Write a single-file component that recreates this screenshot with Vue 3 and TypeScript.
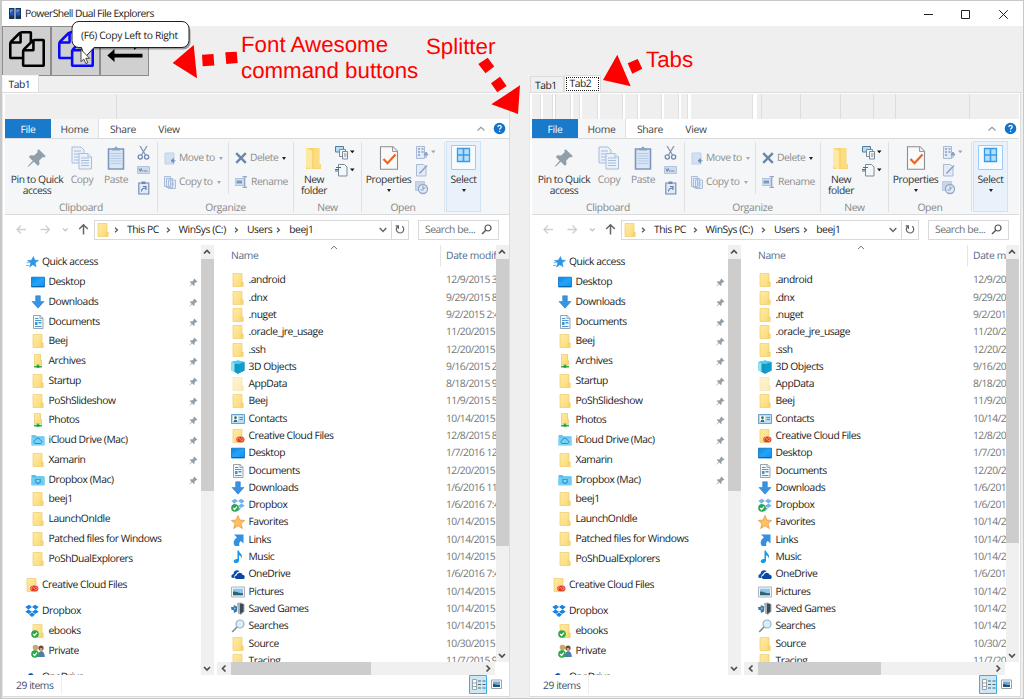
<script setup lang="ts">
interface Entry {
  icon: string
  name: string
  date: string
}
interface TreeNode {
  icon: string
  name: string
  top?: boolean
  gap?: boolean
  pin?: boolean
}
interface Pane {
  id: string
  strips: [number, number][]
}

const panes: Pane[] = [
  { id: 'left', strips: [[111, 1]] },
  {
    id: 'right',
    strips: [
      [8, 2], [20, 2], [23, 1], [38, 2], [47, 2], [65, 2], [90, 2], [105, 2], [129, 2],
      [146, 2], [155, 3], [220, 4], [229, 1], [268, 1], [308, 1], [341, 1], [363, 1], [437, 1],
    ],
  },
]

const tree: TreeNode[] = [
  { icon: 'quick', name: 'Quick access', top: true },
  { icon: 'desktop', name: 'Desktop', pin: true },
  { icon: 'download', name: 'Downloads', pin: true },
  { icon: 'document', name: 'Documents', pin: true },
  { icon: 'folder', name: 'Beej', pin: true },
  { icon: 'netfolder', name: 'Archives', pin: true },
  { icon: 'folder', name: 'Startup', pin: true },
  { icon: 'folder', name: 'PoShSlideshow', pin: true },
  { icon: 'netfolder', name: 'Photos', pin: true },
  { icon: 'cloudfolder', name: 'iCloud Drive (Mac)', pin: true },
  { icon: 'folder', name: 'Xamarin', pin: true },
  { icon: 'dropfolder', name: 'Dropbox (Mac)', pin: true },
  { icon: 'folder', name: 'beej1' },
  { icon: 'folder', name: 'LaunchOnIdle' },
  { icon: 'folder', name: 'Patched files for Windows' },
  { icon: 'folder', name: 'PoShDualExplorers' },
  { icon: 'creative', name: 'Creative Cloud Files', top: true, gap: true },
  { icon: 'dropbox', name: 'Dropbox', top: true, gap: true },
  { icon: 'syncfolder', name: 'ebooks' },
  { icon: 'people', name: 'Private' },
  { icon: 'onedrive', name: 'OneDrive', top: true, gap: true },
]

const files: Entry[] = [
  { icon: 'folder', name: '.android', date: '12/9/2015 3:14 PM' },
  { icon: 'folder', name: '.dnx', date: '9/29/2015 8:20 AM' },
  { icon: 'folder', name: '.nuget', date: '9/2/2015 2:41 PM' },
  { icon: 'folder', name: '.oracle_jre_usage', date: '11/20/2015 9:10 AM' },
  { icon: 'folder', name: '.ssh', date: '12/20/2015 4:05 PM' },
  { icon: 'cube', name: '3D Objects', date: '9/16/2015 2:12 PM' },
  { icon: 'palefolder', name: 'AppData', date: '8/18/2015 9:30 AM' },
  { icon: 'folder', name: 'Beej', date: '11/9/2015 5:22 PM' },
  { icon: 'contacts', name: 'Contacts', date: '10/14/2015 7:02 AM' },
  { icon: 'creative', name: 'Creative Cloud Files', date: '12/8/2015 8:33 AM' },
  { icon: 'desktop', name: 'Desktop', date: '1/7/2016 12:15 PM' },
  { icon: 'document', name: 'Documents', date: '12/20/2015 4:05 PM' },
  { icon: 'download', name: 'Downloads', date: '1/6/2016 11:48 PM' },
  { icon: 'dropsync', name: 'Dropbox', date: '1/6/2016 7:42 PM' },
  { icon: 'star', name: 'Favorites', date: '10/14/2015 7:02 AM' },
  { icon: 'link', name: 'Links', date: '10/14/2015 7:02 AM' },
  { icon: 'music', name: 'Music', date: '10/14/2015 7:02 AM' },
  { icon: 'onedrive', name: 'OneDrive', date: '1/6/2016 7:42 PM' },
  { icon: 'picture', name: 'Pictures', date: '10/14/2015 7:02 AM' },
  { icon: 'games', name: 'Saved Games', date: '10/14/2015 7:02 AM' },
  { icon: 'search', name: 'Searches', date: '10/14/2015 7:02 AM' },
  { icon: 'folder', name: 'Source', date: '10/30/2015 1:20 PM' },
  { icon: 'folder', name: 'Tracing', date: '11/7/2015 9:44 AM' },
]

const crumbs = ['This PC', 'WinSys (C:)', 'Users', 'beej1']
const crumbGaps = [51.5, 68.5, 42.2, 40]
</script>

<template>
  <div class="window">
    <svg class="defs" width="0" height="0">
      <defs>
        <linearGradient id="gFold" x1="0" y1="0" x2="1" y2="1">
          <stop offset="0" stop-color="#ffeba3" /><stop offset="1" stop-color="#fbd974" />
        </linearGradient>
        <linearGradient id="gDesk" x1="0" y1="0" x2="1" y2="1">
          <stop offset="0" stop-color="#0a84e0" /><stop offset=".5" stop-color="#22a4fa" /><stop offset="1" stop-color="#0c93f2" />
        </linearGradient>
        <symbol id="folder" viewBox="0 0 14 14">
          <path d="M2 .5h9v8.500h1.500v4.500H2z" fill="url(#gFold)" /><path d="M2 .5h9v8.500M2 .5v13h10V9h-1.800v4.500" fill="none" stroke="#eecb6b" stroke-width=".7" />
        </symbol>
        <symbol id="palefolder" viewBox="0 0 14 14"><g opacity=".5"><use href="#folder" width="14" height="14" /></g></symbol>
        <symbol id="netfolder" viewBox="0 0 14 14">
          <path d="M3.500 .3h6v6h1v4.200h-7z" fill="url(#gFold)" stroke="#e5c055" stroke-width=".6" /><path d="M7 10.500v2M3 12.600h8" stroke="#35b548" stroke-width="1.600" /><path d="M5.500 12.600h3" stroke="#1e9434" stroke-width="2" />
        </symbol>
        <symbol id="desktop" viewBox="0 0 14 14"><path d="M.5 2.200h13v9.800H.5z" fill="url(#gDesk)" stroke="#1071bd" stroke-width=".8" /><path d="M1 11.500h12" stroke="#0b62a8" stroke-width=".9" /></symbol>
        <symbol id="download" viewBox="0 0 14 14"><path d="M4.700.8h4.600v5.700H13L7 13.200 1 6.500h3.700z" fill="#3893e4" stroke="#2c7dcb" stroke-width=".6" /></symbol>
        <symbol id="document" viewBox="0 0 14 14">
          <path d="M2.500.5h6.700l2.800 2.800v10.200H2.500z" fill="#f4f8fb" stroke="#8c9ba6" stroke-width=".9" /><path d="M9 .5v3h3" fill="none" stroke="#8c9ba6" stroke-width=".8" /><path d="M4 5.500h6.500M4 3.500h3.500M4 11.500h6.500" stroke="#4d9ccc" stroke-width="1" /><path d="M4 7h2.500v3H4zM7.500 7h3v1.500h-3z" fill="#3c96d2" />
        </symbol>
        <symbol id="cloudfolder" viewBox="0 0 14 14"><path d="M.5 2h4l1 1.200h8v9H.5z" fill="#67c8f2" /><path d="M.5 5h13v7.500H.5z" fill="#7ad2f7" /><path d="M4 10.500a1.800 1.800 0 0 1 .3-3.400 2.600 2.600 0 0 1 5 0 1.800 1.800 0 0 1 .5 3.400z" fill="none" stroke="#2b92c3" /></symbol>
        <symbol id="dropfolder" viewBox="0 0 14 14"><path d="M.5 2h4l1 1.200h8v9H.5z" fill="#55c0ed" /><path d="M.5 4.500h13v7.700H.5z" fill="#72cdf5" /><path d="M4 6h6v3.500l-3 2-3-2z" fill="#3aa1d6" /><path d="M5.500 7h3v1.500L7 9.500 5.500 8.500z" fill="#8bdafa" /></symbol>
        <symbol id="quick" viewBox="0 0 14 14"><path d="M8.500 1.500l1.100 3.500 3.900.4-3.300 2.400.9 3.900-3.300-2-3.200 2.400 1.100-4-3.200-2.600 3.900-.3z" fill="#2b96e8" stroke="#2b96e8" stroke-width=".6" /><path d="M1 10.500h3M1.600 7.700h2.500" stroke="#65b4ee" stroke-width=".9" /></symbol>
        <symbol id="creative" viewBox="0 0 14 14"><use href="#folder" width="14" height="14" /><ellipse cx="9.300" cy="10.400" rx="4.200" ry="2.900" fill="#e23b2b" /><path d="M7 11.700a1.400 1.400 0 1 1 1.500-2.200l1.900 2.200a1.400 1.400 0 1 0-.6-2.300" fill="none" stroke="#ffb9a0" stroke-width=".7" /></symbol>
        <symbol id="dropshape" viewBox="0 0 14 14"><path d="M4 .7L7 3 3.300 5.400.3 3zM10 .7L13.700 3l-3 2.400L7 3zM.3 7.700l3-2.300L7 7.800 4 10zM7 7.800l3.700-2.400 3 2.300L10 10zM4 10.800l3-2.200 3 2.200-3 2.300z" fill="#1583e2" /></symbol>
        <symbol id="dropbox" viewBox="0 0 14 14"><use href="#dropshape" width="14" height="14" /></symbol>
        <symbol id="badge" viewBox="0 0 14 14"><circle cx="4" cy="10" r="3.800" fill="#2aa746" /><path d="M2.200 10l1.400 1.500L6 8.600" stroke="#fff" stroke-width="1.200" fill="none" /></symbol>
        <symbol id="dropsync" viewBox="0 0 14 14"><g opacity=".6"><use href="#dropshape" width="14" height="14" /></g><use href="#badge" width="14" height="14" /></symbol>
        <symbol id="syncfolder" viewBox="0 0 14 14"><use href="#folder" width="14" height="14" /><use href="#badge" width="14" height="14" /></symbol>
        <symbol id="people" viewBox="0 0 14 14"><circle cx="4.500" cy="3.500" r="2.800" fill="#c9a86a" /><path d="M.8 12c0-8 7-8 7 0z" fill="#7fa28d" /><circle cx="10" cy="4" r="2.600" fill="#6a4b38" /><path d="M8.800 4h2.500v3H8.800z" fill="#d6a27b" /><path d="M6.800 13c0-8 7-8 7 0z" fill="#4d7fae" /><use href="#badge" width="14" height="14" /></symbol>
        <symbol id="onedrive" viewBox="0 0 14 14"><path d="M.8 10.800C-.3 8.500 1 7.200 2.500 7c0-3.500 4-5 6.200-2.500C7 4.500 5.500 5.500 5.200 7.300 3.400 7.600 3 9.500 3.800 11z" fill="#0a4fae" /><path d="M5 12c-1.800-.8-1.200-3.600.8-3.700.3-3.300 5-3.500 5.700-.5 2.800.2 2.800 3.500 1 4.200z" fill="#0a46a6" /></symbol>
        <symbol id="cube" viewBox="0 0 14 14"><path d="M.5 2L7 .5l6.500 1.500V10.500L7 13.700.5 10.500z" fill="#27b3d9" /><path d="M.5 2L7 4v9.700L.5 10.500z" fill="#8be6f2" /><path d="M3.500 3.500L7 4v9.700l-3.500-2z" fill="#1796bd" /><path d="M7 4l6.500-2V10.500L7 13.700z" fill="#129bd0" /><path d="M.5 2L7 .5l6.500 1.500L7 4z" fill="#4fcde6" /></symbol>
        <symbol id="contacts" viewBox="0 0 14 14"><path d="M.5 2.500h13v9H.5z" fill="#b9def3" stroke="#5d9abf" stroke-width=".9" /><path d="M2 4h5v6H2z" fill="#fff" /><circle cx="4.500" cy="5.700" r="1.400" fill="#466a5b" /><path d="M2.500 10c0-3.500 4-3.500 4 0z" fill="#2d7769" /><path d="M8.500 5.500h3.500M8.500 7.500h3.500" stroke="#3b83b5" stroke-width=".8" /></symbol>
        <symbol id="star" viewBox="0 0 14 14"><path d="M7 .5l1.900 4.600 4.800.3-3.700 3.200 1.300 4.900L7 10.800l-4.300 2.700L4 8.600.3 5.400l4.800-.3z" fill="#fbc162" stroke="#e59b4b" stroke-width=".8" /></symbol>
        <symbol id="link" viewBox="0 0 14 14"><path d="M3 1.500h9.500v9L9.800 8C8.300 9 7.700 11 8.500 13H4C1.500 10 2.800 6.500 6 4.500z" fill="#3590df" /></symbol>
        <symbol id="music" viewBox="0 0 14 14"><path d="M6.500.5h1.300c.5 3 4.400 3.300 2.900 8-.2-2-1.200-2.900-2.700-3.300v5.600c-.3 3-5 3.300-5.300.8-.1-1.900 2-3 3.800-2.500z" fill="#1597ea" /></symbol>
        <symbol id="picture" viewBox="0 0 14 14"><path d="M.5 2h13v10H.5z" fill="#f5f7f8" stroke="#97a3ac" stroke-width=".8" /><path d="M2 3.700h10v6.600H2z" fill="#8fc7ee" /><path d="M2 7c3-1.500 5 2 10 1v2.300H2z" fill="#2d6475" /></symbol>
        <symbol id="games" viewBox="0 0 14 14"><path d="M6 1l4-.5 3.500 2v7L10 13l-3-1.500z" fill="#a8b0b5" /><path d="M9 1.500l3.500.5v7.500l-3.500 2.500z" fill="#3c4b54" /><path d="M0 5h2.500l.5-2 3 1.500v5L3 11l-.5-3H.5z" fill="#3a78ac" /><path d="M3 5l2 1.500-2 1.500z" fill="#8fbbdb" /></symbol>
        <symbol id="search" viewBox="0 0 14 14"><circle cx="9" cy="5" r="4" fill="#d8effb" stroke="#9ab4c6" stroke-width="1.200" /><path d="M6 8L1.200 13" stroke="#8a8f94" stroke-width="1.800" /></symbol>
        <symbol id="pin" viewBox="0 0 14 14"><path d="M8.200.8l5 5-1.300.9-.8-.4-2.600 2.600.3 2.500-1.300 1L4.800 9.700 1 13.200l-.5-.4L4 8.900 1.300 6.300l1-1.200 2.700.2 2.500-2.500-.3-1z" fill="#929fa8" /></symbol>
        <symbol id="files" viewBox="0 0 1792 1792"><path fill="currentColor" d="M1696 384q40 0 68 28t28 68v1216q0 40-28 68t-68 28h-960q-40 0-68-28t-28-68v-288h-544q-40 0-68-28t-28-68v-672q0-40 20-88t48-76l408-408q28-28 76-48t88-20h416q40 0 68 28t28 68v328q68-40 128-40h416zm-544 213l-299 299h299v-299zm-640-384l-299 299h299v-299zm196 647l316-316v-416h-384v416q0 40-28 68t-68 28h-416v640h512v-256q0-40 20-88t48-76zm956 804v-1152h-384v416q0 40-28 68t-68 28h-416v640h896z" /></symbol>
      </defs>
    </svg>

    <header class="titlebar">
      <svg class="appicon" viewBox="0 0 12 11"><path d="M0 0h5.500v11H0zM6.500 0H12v11H6.500z" fill="#17345f" /><path d="M1 1.500h3.500v6H1zM7.500 1.500H11v6H7.500z" fill="#2459b8" /><path d="M1 1.500h3.500L1 5zM7.500 1.500H11L7.500 5z" fill="#6f9ade" /></svg>
      <span class="title">PowerShell Dual File Explorers</span>
      <svg class="winctl" viewBox="0 0 90 14" width="90" height="14" fill="none" stroke="#222">
        <path d="M4 7.500h9" /><path d="M41.500 3.500h8v8h-8z" /><path d="M79.200 3.200l8.600 8.600M87.800 3.200l-8.600 8.600" />
      </svg>
    </header>

    <div class="toolbar">
      <button class="cmd"><svg width="36" height="36"><use href="#files" /></svg></button>
      <button class="cmd active"><svg width="36" height="36"><use href="#files" /></svg></button>
      <button class="cmd"><svg width="36" height="36" viewBox="0 0 36 36"><path d="M0 10.500h27V6l8.500 6.500L27 19v-4.800H0zM35.500 22.700H7.500V18L.3 24.500l7.200 6.500v-4.600h28z" fill="#000" /></svg></button>
    </div>

    <main class="split">
      <section v-for="pane in panes" :key="pane.id" class="pane" :class="pane.id">
        <nav class="tabs">
          <span class="tab" :class="{ current: pane.id === 'left' }">Tab1</span>
          <span v-if="pane.id === 'right'" class="tab current second"><i>Tab2</i></span>
        </nav>
        <div class="page">
          <div class="strip">
            <i v-for="s in pane.strips" :key="s[0]" :class="{ thick: s[1] > 1 }" :style="{ left: s[0] + 'px', width: s[1] + 'px' }"></i>
          </div>

          <div class="menubar">
            <span class="file">File</span><span class="home">Home</span><span class="share">Share</span><span class="view">View</span>
            <svg class="help" width="32" height="14" viewBox="0 0 32 14">
              <path d="M2.500 8.500L6 5.300l3.500 3.200" fill="none" stroke="#999" stroke-width="1.200" /><circle cx="24.500" cy="6.500" r="5.800" fill="#1273c9" />
              <path d="M22.800 5.100c.1-2.300 3.500-2.200 3.400-.1 0 1.300-1.600 1.200-1.600 2.600M24.600 8.700v1.300" fill="none" stroke="#fff" stroke-width="1.200" />
            </svg>
          </div>

          <div class="ribbon">
            <div class="group clip">
              <div class="gbody">
                <div class="big pinq"><svg width="20" height="20"><use href="#pin" /></svg><span>Pin to Quick<br />access</span></div>
                <div class="big dim copy">
                  <svg width="22" height="24" viewBox="0 0 22 24" fill="#eaf1fa" stroke="#a9bddb"><path d="M1 1h9l3 3v13H1z" /><path d="M3 5h7M3 8h7M3 11h7M3 14h7" /><path d="M8 7.500h9l3.500 3.500v12H8z" /><path d="M10 12h8M10 14.500h8M10 17h8M10 19.500h8M17 7.500V11h3.500" /></svg>
                  <span>Copy</span>
                </div>
                <div class="big dim paste">
                  <svg width="18" height="24" viewBox="0 0 18 24"><path d="M1.500 3h15v20h-15z" fill="#d9e6f6" stroke="#7d96bd" stroke-width="1.600" /><path d="M5 4.500V2h2.500a1.500 1.500 0 0 1 3 0H13v2.500z" fill="#8fa4c5" /><path d="M3.500 7.500h11M3.500 10h11M3.500 12.500h11M3.500 15h11M3.500 17.500h11" stroke="#b5c9e4" /></svg>
                  <span>Paste</span>
                </div>
                <svg class="minis" width="13" height="50" viewBox="0 0 13 50" fill="none">
                  <path d="M3 0l5.500 9M10 0L4.500 9" stroke="#8496b3" stroke-width="1.300" /><circle cx="3.300" cy="11" r="2.100" stroke="#7189b0" stroke-width="1.300" /><circle cx="9.600" cy="11" r="2.100" stroke="#7189b0" stroke-width="1.300" />
                  <path d="M.5 20.500h12v7H.5z" fill="#cfdbec" stroke="#b4c4dd" /><path d="M2 22.500l1.200 3 1-3 1.200 3M6.500 25h4" stroke="#6680a9" stroke-width=".9" />
                  <path d="M1.800 37h10v11h-10z" fill="#e1ebf7" stroke="#7088b0" stroke-width="1.100" /><path d="M4.500 35.500h4v2.500h-4z" fill="#7088b0" /><path d="M4.500 45.500c0-2.500 1-3.500 4-3.500M6 40.500h3v3.500" stroke="#617caa" stroke-width="1.100" />
                </svg>
              </div>
              <div class="glabel">Clipboard</div>
            </div>

            <div class="group org">
              <div class="gbody">
                <div class="rows move">
                  <p><svg width="12" height="13" viewBox="0 0 12 13"><path d="M1 1h9v11H1z" fill="#d3e0f1" stroke="#c1d0e6" /><path d="M11.500 8.700H7.500M9.500 6.500l-2.500 2.200 2.500 2.200z" fill="#7390bd" stroke="#7390bd" stroke-width=".9" /></svg><span>Move to</span><b class="dd grey"></b></p>
                  <p><svg width="12" height="13" viewBox="0 0 12 13" fill="#e4edf8" stroke="#a9bcd9"><path d="M.5.5h6v10h-6zM2.500 2.500h6v9h-6zM4.500 4h7v8.500h-7zM6 7h4M6 9h4" /></svg><span>Copy to</span><b class="dd grey"></b></p>
                </div>
                <div class="rows del">
                  <p><svg width="12" height="12" viewBox="0 0 12 12"><path d="M1.200 1.200l9.600 9.600M10.800 1.200l-9.600 9.600" stroke="#6c86ad" stroke-width="2.400" /></svg><span>Delete</span><b class="dd"></b></p>
                  <p><svg width="13" height="12" viewBox="0 0 13 12" fill="none"><path d="M0 2.500h9v7H0z" fill="#d2dfef" stroke="#b0c3de" /><path d="M1.500 4.500H7v3H1.500z" fill="#7f9ac2" /><path d="M7.500.7h4.500M9.800 1v10M7.500 11.300h4.500" stroke="#7e96bd" /></svg><span>Rename</span></p>
                </div>
              </div>
              <div class="glabel">Organize</div>
            </div>

            <div class="group new">
              <div class="gbody">
                <div class="big nf"><svg width="18" height="24" viewBox="0 0 18 24"><path d="M1 2h13.500v16H16v5H1z" fill="#f8d56f" /><path d="M1 2l6 3v18.500L1 21z" fill="#ffe9a0" /><path d="M9 2h5v16h1.500v4h-6.500z" fill="#fbdc82" /></svg><span>New<br />folder</span></div>
                <svg class="newmini" width="20" height="36" viewBox="0 0 20 36" fill="#f3f7fa" stroke="#7b8b96"><path d="M.5.500h8v5.500h-8z" fill="#b9dcf0" stroke="#4e7f9f" /><path d="M4.500 3.500h6v7h-6z" /><path d="M7.500 5.500h5v7.500h-5zM9 8h2.500M9 10h2.500" /><path d="M3.500 18.500h6l2.500 2.500v9h-8.500z" /><path d="M0 23.500h4M1 21.500h5M0 25h3" stroke="#2777b9" /><path d="M15 4.500h4.500l-2.200 2.700zM15 22.500h4.500l-2.200 2.700z" fill="#111" stroke="none" /></svg>
              </div>
              <div class="glabel">New</div>
            </div>

            <div class="group open">
              <div class="gbody">
                <div class="big prop"><svg width="20" height="24" viewBox="0 0 20 24"><path d="M1.500.7h12.500l4.500 4.500v18H1.500z" fill="#fafafa" stroke="#8d8d8d" stroke-width="1.100" /><path d="M13.500 1v4.500h5" fill="#eee" stroke="#9a9a9a" /><path d="M4.500 13l4 4.200 8-8.700" fill="none" stroke="#f0631e" stroke-width="2.200" /></svg><span>Properties</span><b class="dd"></b></div>
                <svg class="openmini" width="22" height="50" viewBox="0 0 22 50" fill="#e3ebf7" stroke="#a9b9d6"><path d="M1.500.5h8v12h-8z" /><path d="M3 3h2M3 6h2M3 9h2M6.500 3h2M6.500 6h2" stroke="#8c9fc2" stroke-width="1.300" /><path d="M11 12V7M9 9l2-3 2 3z" fill="#8ba0c6" stroke="#8ba0c6" /><path d="M1.500 18.500h7l2.500 2.500v9h-9.500z" /><path d="M4.500 27.500l7.500-8" stroke="#8da2c9" stroke-width="1.600" /><path d="M.5 35.500h9v9h-9z" fill="#c8d5e9" stroke="#bccbe2" /><circle cx="8" cy="43" r="4.500" stroke="#94a7c8" stroke-width="1.300" /><path d="M8 40v3l2.500-1.500M5.500 44h3" stroke="#8296b9" /><path d="M16 4.500h4.500l-2.200 2.700z" fill="#a5a5a5" stroke="none" /></svg>
              </div>
              <div class="glabel">Open</div>
            </div>

            <div class="select">
              <svg width="25" height="25" viewBox="0 0 25 25"><path d="M.5.5h24v24H.5z" fill="#f5fbff" stroke="#9dcbf5" /><path d="M6.500 3.500h12v13h-12z" fill="#b5e0fb" stroke="#3a9bea" stroke-width="1.300" /><path d="M12.500 3.500v13M6.500 10h12" stroke="#3a9bea" stroke-width="1.600" /></svg>
              <span>Select</span><b class="dd"></b>
            </div>
          </div>

          <div class="address">
            <svg class="navs" width="76" height="14" viewBox="0 0 76 14" fill="none" stroke-width="1.300">
              <path d="M10 6.500H1M5 2.500l-4 4 4 4M24.500 6.500h9M29.500 2.500l4 4-4 4" stroke="#cfcfcf" /><path d="M47 5.500l2.300 2.300L51.600 5.500" stroke="#c5c5c5" /><path d="M67.500 11.500V2M63.200 6l4.300-4.300L71.800 6" stroke="#666" stroke-width="1.500" />
            </svg>
            <div class="path">
              <svg class="pfold" width="14" height="14"><use href="#folder" /></svg>
              <span v-for="(c, i) in crumbs" :key="c" class="crumb" :style="{ width: crumbGaps[i] + 'px' }">
                <svg width="5" height="8" viewBox="0 0 5 8"><path d="M1 1.700L3.500 4 1 6.300" fill="none" stroke="#555" stroke-width="1.200" /></svg>{{ c }}
              </span>
              <svg class="drop" width="8" height="6" viewBox="0 0 8 6"><path d="M.7 1l3.300 3.500L7.300 1" fill="none" stroke="#666" stroke-width="1.500" /></svg>
              <span class="refresh"><svg width="10" height="11" viewBox="0 0 10 11"><path d="M7.200 2.300A3.700 3.700 0 1 1 3 2.200M3.400 5V1.800H.6" fill="none" stroke="#666" stroke-width="1.200" /></svg></span>
            </div>
            <div class="find"><span>Search be...</span><svg width="11" height="11" viewBox="0 0 11 11"><circle cx="7" cy="4" r="3" fill="none" stroke="#555" stroke-width="1.200" /><path d="M5 6L1 10" stroke="#555" stroke-width="1.500" /></svg></div>
          </div>

          <div class="content">
            <div class="tree">
              <div v-for="(n, i) in tree" :key="i" class="node" :class="{ top: n.top, gap: n.gap }">
                <svg class="ico" width="14" height="14"><use :href="'#' + n.icon" /></svg>
                <span>{{ n.name }}</span>
                <svg v-if="n.pin" class="pin" width="9" height="9"><use href="#pin" /></svg>
              </div>
            </div>
            <div class="vbar">
              <svg width="12" height="13" viewBox="0 0 12 13"><path d="M3 8.500L6 5.500l3 3" fill="none" stroke="#505050" stroke-width="1.700" /></svg>
              <i class="thumb"></i>
              <svg width="12" height="13" viewBox="0 0 12 13"><path d="M3 5l3 3 3-3" fill="none" stroke="#505050" stroke-width="1.700" /></svg>
            </div>
            <div class="listing">
              <div class="upper">
                <div class="table">
                  <div class="thead"><span class="cname">Name</span><svg width="8" height="5" viewBox="0 0 8 5"><path d="M1 4l3-2.800L7 4" fill="none" stroke="#777" /></svg><span class="cdate">Date modified</span></div>
                  <div v-for="f in files" :key="f.name" class="row">
                    <svg class="ico" width="14" height="14"><use :href="'#' + f.icon" /></svg><span class="fname">{{ f.name }}</span><span class="date">{{ f.date }}</span>
                  </div>
                </div>
                <div class="vbar list">
                  <svg width="12" height="13" viewBox="0 0 12 13"><path d="M3 8.500L6 5.500l3 3" fill="none" stroke="#505050" stroke-width="1.700" /></svg>
                  <i class="thumb"></i>
                  <svg width="12" height="13" viewBox="0 0 12 13"><path d="M3 5l3 3 3-3" fill="none" stroke="#505050" stroke-width="1.700" /></svg>
                </div>
              </div>
              <div class="hbar">
                <svg width="14" height="13" viewBox="0 0 14 13"><path d="M8.500 3.500l-3 3 3 3" fill="none" stroke="#505050" stroke-width="1.700" /></svg>
                <i class="thumb"></i>
                <svg width="14" height="13" viewBox="0 0 14 13"><path d="M5.500 3.500l3 3-3 3" fill="none" stroke="#505050" stroke-width="1.700" /></svg>
              </div>
            </div>
          </div>

          <footer class="status">
            <span>29 items</span>
            <svg width="34" height="19" viewBox="0 0 34 19"><path d="M.5.5h17v18H.5z" fill="#cce8f6" stroke="#3cb0e0" /><path d="M3.500 4.500h4v10h-4zM3.500 8h4M3.500 11.500h4" fill="#fff" stroke="#8a8f94" stroke-width=".8" /><path d="M9 6h3M13.500 6h3M9 9.500h3M13.500 9.500h3M9 13h3M13.500 13h3" stroke="#4d6472" /><path d="M22.500 5h10v8.500h-10z" fill="#fff" stroke="#9aa3aa" /><path d="M24 6.500h7v5.500h-7z" fill="#6ea9dd" /><path d="M24 9c3 0 4 1.500 7 1v2h-7z" fill="#25516b" /></svg>
          </footer>
        </div>
      </section>
    </main>

    <div class="notes">
      <svg width="1024" height="120" viewBox="0 0 1024 120">
        <g fill="#f00">
          <path d="M172.700 63L193.700 45l3.300 33.300zM202 54.700l11.500-.7.8 11.600-11.600.7zM225.300 52.300l11.400-.6 1 11.200-11.400 1.100z" />
          <path d="M478.300 64l9.400-6.300 6.500 8.900-8.700 6.700zM491 83.300l9-6.600 6.700 9.300-9.400 6.300zM491.300 104.300L520 85.300l-2 28.700z" />
          <path d="M617.300 54.700L603 80l27.700 6.300zM627.700 63.300l10-4.300 4.600 9.700-10 5z" />
        </g>
        <g transform="translate(1.500 2)" opacity=".35"><rect x="72" y="22" width="117" height="25.500" rx="7" fill="#000" /></g>
        <path d="M79 21.500h103a7 7 0 0 1 7 7v12a7 7 0 0 1-7 7H94l-9.500 10.500-3-10.500H79a7 7 0 0 1-7-7v-12a7 7 0 0 1 7-7z" fill="#fff" stroke="#222" />
        <path d="M81 49.500v12.200l2.800-2.600 2 4.600 2-.9-2-4.500h3.900z" fill="#fff" stroke="#333" stroke-width=".9" />
      </svg>
      <span class="tip">(F6) Copy Left to Right</span>
      <span class="red n1">Font Awesome<br />command buttons</span>
      <span class="red n2">Splitter</span>
      <span class="red n3">Tabs</span>
    </div>
  </div>
</template>

<style>
html, body { margin: 0; overflow: hidden; }
</style>

<style scoped>
* { box-sizing: border-box; }
svg { display: block; flex: none; }
.window { position: relative; width: 1024px; height: 699px; overflow: hidden; display: flex; flex-direction: column; background: #efefef; border: 1px solid #c8c8c8; border-left-width: 2px; font: 10.300px/12px "Open Sans", "Noto Sans", sans-serif; letter-spacing: -.44px; color: #1a1a1a; text-rendering: geometricPrecision; white-space: nowrap; }
.defs { position: absolute; }
.titlebar { flex: none; height: 25px; background: #fff; display: flex; align-items: center; padding-left: 7px; }
.appicon { width: 12px; height: 11px; }
.title { margin-left: 4px; flex: 1; letter-spacing: -.54px; }
.winctl { margin-right: 13px; }
.toolbar { flex: none; height: 49px; display: flex; }
.cmd { width: 49px; height: 50px; padding: 0 0 4px 0; display: flex; align-items: center; justify-content: center; background: #d0d0d0; border: 1px solid #8c8c8c; color: #000; }
.cmd.active { color: #0a0af5; }
.split { flex: 1; min-height: 0; display: flex; gap: 19px; }
.pane { display: flex; flex-direction: column; }
.left { width: 508px; }
.right { width: 492px; }
.tabs { height: 17px; flex: none; display: flex; align-items: flex-end; }
.tab { height: 16px; width: 34px; padding: 3px 0 0 6px; border: 1px solid #dcdcdc; border-bottom: 0; background: #f0f0f0; }
.tab.current { height: 17px; width: 37px; background: #fff; }
.left .tab.current { border-top-color: #f4f4f4; border-left-color: #f4f4f4; padding: 3px 0 0 5.500px; }
.right .tab { padding-left: 4px; margin-left: 1px; }
.right .tab.second { margin-left: 0; padding: 1px; width: 37px; }
.second i { display: block; font-style: normal; height: 14px; border: 1px dotted #222; padding: 0 0 0 2.500px; line-height: 13px; }
.page { flex: 1; min-height: 0; display: flex; flex-direction: column; background: #fff; border: 1px solid #dcdcdc; border-left-color: #e8e8e8; padding: 1px 0 2px 2px; margin-bottom: 1px; }
.right .page { padding-right: 1px; }
.strip { flex: none; height: 25px; background: #efefef; position: relative; }
.strip i { position: absolute; top: 0; height: 25px; background: #dcdcdc; }
.strip i.thick { background: #fff; border-left: 1px solid #e0e0e0; box-sizing: content-box; }
.menubar { flex: none; height: 19px; display: flex; line-height: 22px; text-align: center; color: #444; letter-spacing: -.3px; }
.menubar .file { width: 46px; background: #1979ca; color: #fff; }
.menubar .home { width: 48px; background: #f5f6f7; border: 1px solid #dfe0e1; border-width: 0 1px 0 0; }
.menubar .share { width: 48px; }
.menubar .view { width: 44px; }
.help { margin: 3px 2px 0 auto; }
.right .help { margin-right: 1px; }
.ribbon { flex: none; height: 77px; background: #f5f6f7; border: solid #dadbdc; border-width: 1px 0; display: flex; color: #333; line-height: 10.500px; }
.group { margin-top: 3px; height: 70px; border-right: 1px solid #e0e1e2; display: flex; flex-direction: column; }
.gbody { flex: none; height: 59px; display: flex; }
.glabel { text-align: center; color: #868686; line-height: 12px; padding-top: 1px; letter-spacing: -.3px; }
.clip { width: 153px; }
.org { width: 136px; }
.new { width: 68px; }
.open { width: 83px; }
.big { display: flex; flex-direction: column; align-items: center; text-align: center; padding-top: 4px; }
.big > span { margin-top: 5px; }
.dim, .rows { color: #8d8d8d; }
.pinq { width: 64px; }
.pinq svg { margin: 2px 0 2px; }
.copy { width: 26px; }
.paste { width: 42px; }
.minis { margin: 4px 0 0; }
.rows { height: 52px; padding: 4px 0 0 6px; }
.rows p { margin: 0; height: 24px; display: flex; align-items: center; line-height: 12px; }
.rows span { margin-left: 3px; }
.move { width: 71px; border-right: 1px solid #e0e1e2; }
.dd { display: block; border: 2.500px solid transparent; border-top: 3px solid #222; border-bottom: 0; width: 0; height: 0; }
.dd.grey { border-top-color: #a8a8a8; }
.rows .dd { margin-left: 4px; }
.nf { width: 40px; }
.newmini { margin: 4px 0 0 1px; }
.prop { width: 53px; }
.big .dd, .select .dd { margin-top: 3.500px; }
.openmini { margin: 4px 0 0 0; }
.select { width: 35px; height: 71px; margin: 2px 0 0 1px; border: 1px solid #cde4f7; background: #e9f2fa; display: flex; flex-direction: column; align-items: center; padding-top: 3px; }
.select span { margin-top: 5px; }
.address { flex: none; height: 29px; display: flex; align-items: center; }
.navs { margin-left: 11px; }
.path { margin-left: 2px; height: 20px; border: 1px solid #d9d9d9; display: flex; align-items: center; width: 315px; }
.right .path { width: 298px; }
.pfold { margin: 0 3px 0 1px; }
.crumb { display: flex; align-items: center; }
.crumb svg { margin-right: 8px; margin-left: 1px; }
.drop { margin-left: auto; margin-right: 4px; }
.refresh { width: 17px; height: 18px; border-left: 1px solid #d9d9d9; display: flex; align-items: center; justify-content: center; }
.find { width: 81px; height: 20px; margin-left: 9px; border: 1px solid #d9d9d9; padding: 0 6px 0 6px; display: flex; align-items: center; justify-content: space-between; color: #6d6d6d; }
.content { flex: 1; min-height: 0; display: flex; padding-top: 1px; }
.tree { width: 196px; overflow: hidden; padding-top: 7.600px; }
.node { height: 19.750px; display: flex; align-items: center; padding-left: 26px; }
.node.top { padding-left: 20px; }
.node.gap { margin-top: 6.600px; }
.node .ico { margin-right: 3.500px; }
.node.top .ico { margin-right: 3px; }
.node .pin { margin: 1px 3px 0 auto; }
.vbar { width: 13px; background: #f0f0f0; display: flex; flex-direction: column; flex: none; }
.vbar .thumb { height: 232px; background: #cdcdcd; margin: 1px 0 auto; }
.listing { flex: 1; min-width: 0; display: flex; flex-direction: column; margin-left: 3px; }
.upper { flex: 1; min-height: 0; display: flex; }
.table { flex: 1; min-width: 0; overflow: hidden; padding-left: 14px; }
.thead { height: 26.700px; display: flex; color: #55688a; }
.thead .cname { flex: none; width: 98.500px; padding-top: 5px; letter-spacing: -.3px; }
.thead .cdate { flex: none; margin-left: 102.500px; border-left: 1px solid #e5e5e5; height: 21px; padding: 5px 0 0 5px; letter-spacing: -.3px; }
.row { height: 17.300px; display: flex; align-items: center; }
.fname { flex: none; width: 197.500px; margin-left: 3.500px; }
.date { flex: none; color: #767676; letter-spacing: -.56px; }
.vbar.list .thumb { height: 287px; }
.right .vbar.list .thumb { height: 284px; }
.hbar { height: 13px; flex: none; margin-right: 14px; background: #f0f0f0; display: flex; }
.hbar .thumb { width: 140px; margin-right: auto; background: #cdcdcd; }
.right .hbar .thumb { width: 123px; }
.status { flex: none; height: 19px; display: flex; justify-content: space-between; padding: 0 6px 0 11px; color: #3c4f6c; line-height: 22px; }
.status span { width: 46px; border-right: 1px solid #eee; }
.notes { position: absolute; left: -2px; top: -1px; width: 1024px; height: 120px; pointer-events: none; }
.notes span { position: absolute; }
.tip { left: 81px; top: 30px; letter-spacing: -.35px; }
.notes .red { color: #f00; font: 22.300px/25.600px "Liberation Sans", Arial, sans-serif; letter-spacing: 0; }
.n1 { left: 241px; top: 32px; }
.n2 { left: 426px; top: 34px; }
.n3 { left: 646px; top: 47px; }
</style>
